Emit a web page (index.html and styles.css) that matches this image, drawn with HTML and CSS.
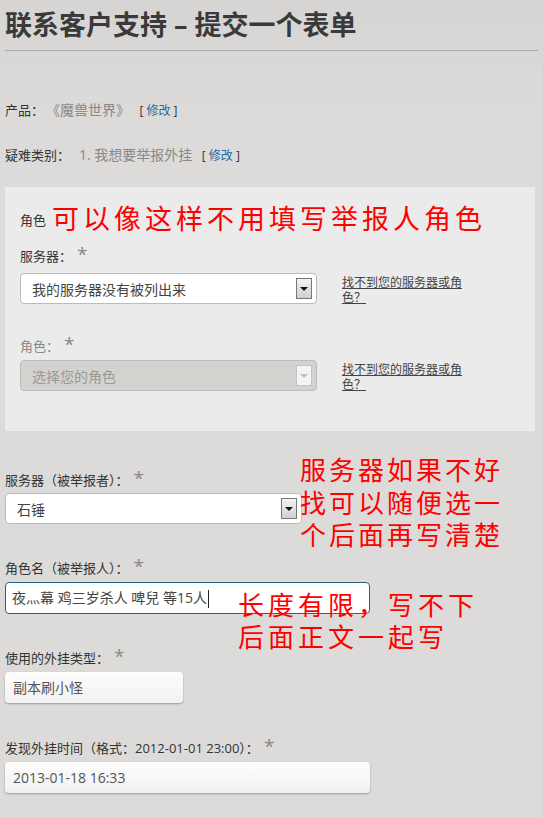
FILE: index.html
```html
<!DOCTYPE html>
<html lang="zh-CN">
<head>
    <meta charset="UTF-8">
    <title>联系客户支持 – 提交一个表单</title>
    <link rel="stylesheet" href="styles.css">
</head>
<body>
    <h1 class="page-title">联系客户支持 – 提交一个表单</h1>

    <div class="info-row product-row">
        产品<span class="colon">：</span><span class="info-value">《魔兽世界》</span>
        <span class="edit">[ <a href="#">修改</a> ]</span>
    </div>
    <div class="info-row category-row">
        疑难类别<span class="colon">：</span><span class="info-value">1. 我想要举报外挂</span>
        <span class="edit">[ <a href="#">修改</a> ]</span>
    </div>

    <div class="panel">
        <div class="panel-head">
            <span class="panel-title">角色</span>
            <span class="note note-inline">可以像这样不用填写举报人角色</span>
        </div>

        <label class="field-label">服务器<span class="colon">：</span><span class="req">*</span></label>
        <div class="select-row">
            <div class="select">
                <span class="select-text">我的服务器没有被列出来</span>
                <span class="arrow"></span>
            </div>
            <a href="#" class="help-link">找不到您的服务器或角色？</a>
        </div>

        <label class="field-label disabled role-label">角色<span class="colon">：</span><span class="req">*</span></label>
        <div class="select-row">
            <div class="select is-disabled">
                <span class="select-text">选择您的角色</span>
                <span class="arrow"></span>
            </div>
            <a href="#" class="help-link">找不到您的服务器或角色？</a>
        </div>
    </div>

    <label class="field-label first">服务器（被举报者）<span class="colon">：</span><span class="req">*</span></label>
    <div class="select">
        <span class="select-text">石锤</span>
        <span class="arrow"></span>
    </div>

    <label class="field-label">角色名（被举报人）<span class="colon">：</span><span class="req">*</span></label>
    <div class="text-input wide focused">夜灬幕 鸡三岁杀人 啤兒 等15人<span class="caret"></span></div>

    <label class="field-label">使用的外挂类型<span class="colon">：</span><span class="req">*</span></label>
    <div class="text-input short">副本刷小怪</div>

    <label class="field-label last">发现外挂时间（格式：2012-01-01 23:00）<span class="colon">：</span><span class="req">*</span></label>
    <div class="text-input wide">2013-01-18 16:33</div>

    <div class="note note-server">服务器如果不好<br>找可以随便选一<br>个后面再写清楚</div>
    <div class="note note-length">长度有限，写不下<br>后面正文一起写</div>
</body>
</html>
```

FILE: styles.css
```css
body {
    font-family: 'Open Sans', 'Noto Sans CJK SC', sans-serif;
    font-size: 13px;
    color: #333;
    background: linear-gradient(#d6d5d3, #dddbd9 120px);
    margin: 0;
    padding: 0 5px;
    height: 817px;
    overflow: hidden;
    position: relative;
}
.page-title {
    margin: 0;
    padding: 6px 0 6px 0;
    line-height: 38px;
    font-size: 27px;
    font-weight: bold;
    color: #3a3a3a;
    border-bottom: 1px solid #aaa;
}
.colon {
    font-family: 'Noto Sans CJK JP', sans-serif;
    margin-right: 5px;
}
.info-row {
    line-height: 20px;
}
.info-row .colon {
    margin-right: 9px;
}
.product-row {
    margin-top: 49px;
}
.category-row {
    margin-top: 24px;
}
.info-value {
    color: #888;
    font-size: 14px;
}
.edit {
    font-size: 12px;
    margin-left: 6px;
}
.edit a {
    color: #1c6ea4;
    text-decoration: none;
}
.panel {
    margin: 21px 3px 0 0;
    background-color: #ebebeb;
    padding: 15px 15px 39px 15px;
}
.panel-head {
    display: flex;
    align-items: center;
    height: 34px;
}
.panel-title {
    font-size: 13px;
    margin-right: 6px;
}
.note {
    color: #f00;
    font-size: 27px;
    letter-spacing: 4px;
}
.note-inline {
    line-height: 34px;
}
.note-server {
    position: absolute;
    left: 300px;
    top: 454px;
    font-size: 26px;
    line-height: 32.5px;
    letter-spacing: 3px;
}
.note-length {
    position: absolute;
    left: 238px;
    top: 589px;
    font-size: 26px;
    line-height: 32px;
    letter-spacing: 4px;
}
.field-label {
    display: block;
    height: 20px;
    line-height: 20px;
    margin-top: 34px;
    margin-bottom: 4px;
}
.panel .field-label {
    margin-top: 10px;
    margin-bottom: 7px;
}
.panel .role-label {
    margin-top: 31px;
    margin-bottom: 4px;
}
.field-label.first {
    margin-top: 39px;
    margin-bottom: 3px;
}
.field-label.last {
    margin-top: 35px;
}
.field-label.disabled {
    color: #888;
}
.req {
    color: #888;
    font-size: 19px;
    vertical-align: top;
    line-height: 16px;
}
.select-row {
    display: flex;
    align-items: flex-start;
    gap: 25px;
}
.select {
    box-sizing: border-box;
    width: 297px;
    height: 31px;
    background-color: #fff;
    border: 1px solid #bbb;
    border-radius: 4px;
    display: flex;
    align-items: center;
    padding: 0 4px 0 11px;
}
.select-text {
    flex: 1;
    font-size: 14px;
    color: #444;
}
.select .arrow {
    box-sizing: border-box;
    width: 16px;
    height: 21px;
    border: 1px solid #777;
    background: linear-gradient(#f4f4f4, #cfcfcf);
    position: relative;
}
.select .arrow::after {
    content: '';
    position: absolute;
    left: 3px;
    top: 8px;
    border-left: 4px solid transparent;
    border-right: 4px solid transparent;
    border-top: 4px solid #111;
}
.select.is-disabled {
    background-color: #d3d2cf;
}
.select.is-disabled .select-text {
    color: #999;
}
.select.is-disabled .arrow {
    border-color: #c4c4c4;
    background: #f4f4f4;
}
.select.is-disabled .arrow::after {
    border-top-color: #bbb;
}
.help-link {
    width: 122px;
    font-size: 12px;
    line-height: 15px;
    color: #444;
    margin-top: 2px;
}
.text-input {
    box-sizing: border-box;
    height: 31px;
    line-height: 31px;
    padding-left: 8px;
    font-size: 14px;
    color: #555;
    border-radius: 4px;
    background: linear-gradient(#fdfdfd, #f1f1f1);
    box-shadow: 0 1px 2px rgba(0, 0, 0, 0.3);
}
.text-input.wide {
    width: 365px;
}
.text-input.short {
    width: 178px;
}
.text-input.focused {
    height: 32px;
    line-height: 30px;
    background: #fff;
    border: 1px solid #2a5f86;
    box-shadow: none;
    padding-left: 6px;
    color: #444;
}
.caret {
    display: inline-block;
    width: 1px;
    height: 18px;
    background: #222;
    vertical-align: middle;
    margin-left: 1px;
}
```
